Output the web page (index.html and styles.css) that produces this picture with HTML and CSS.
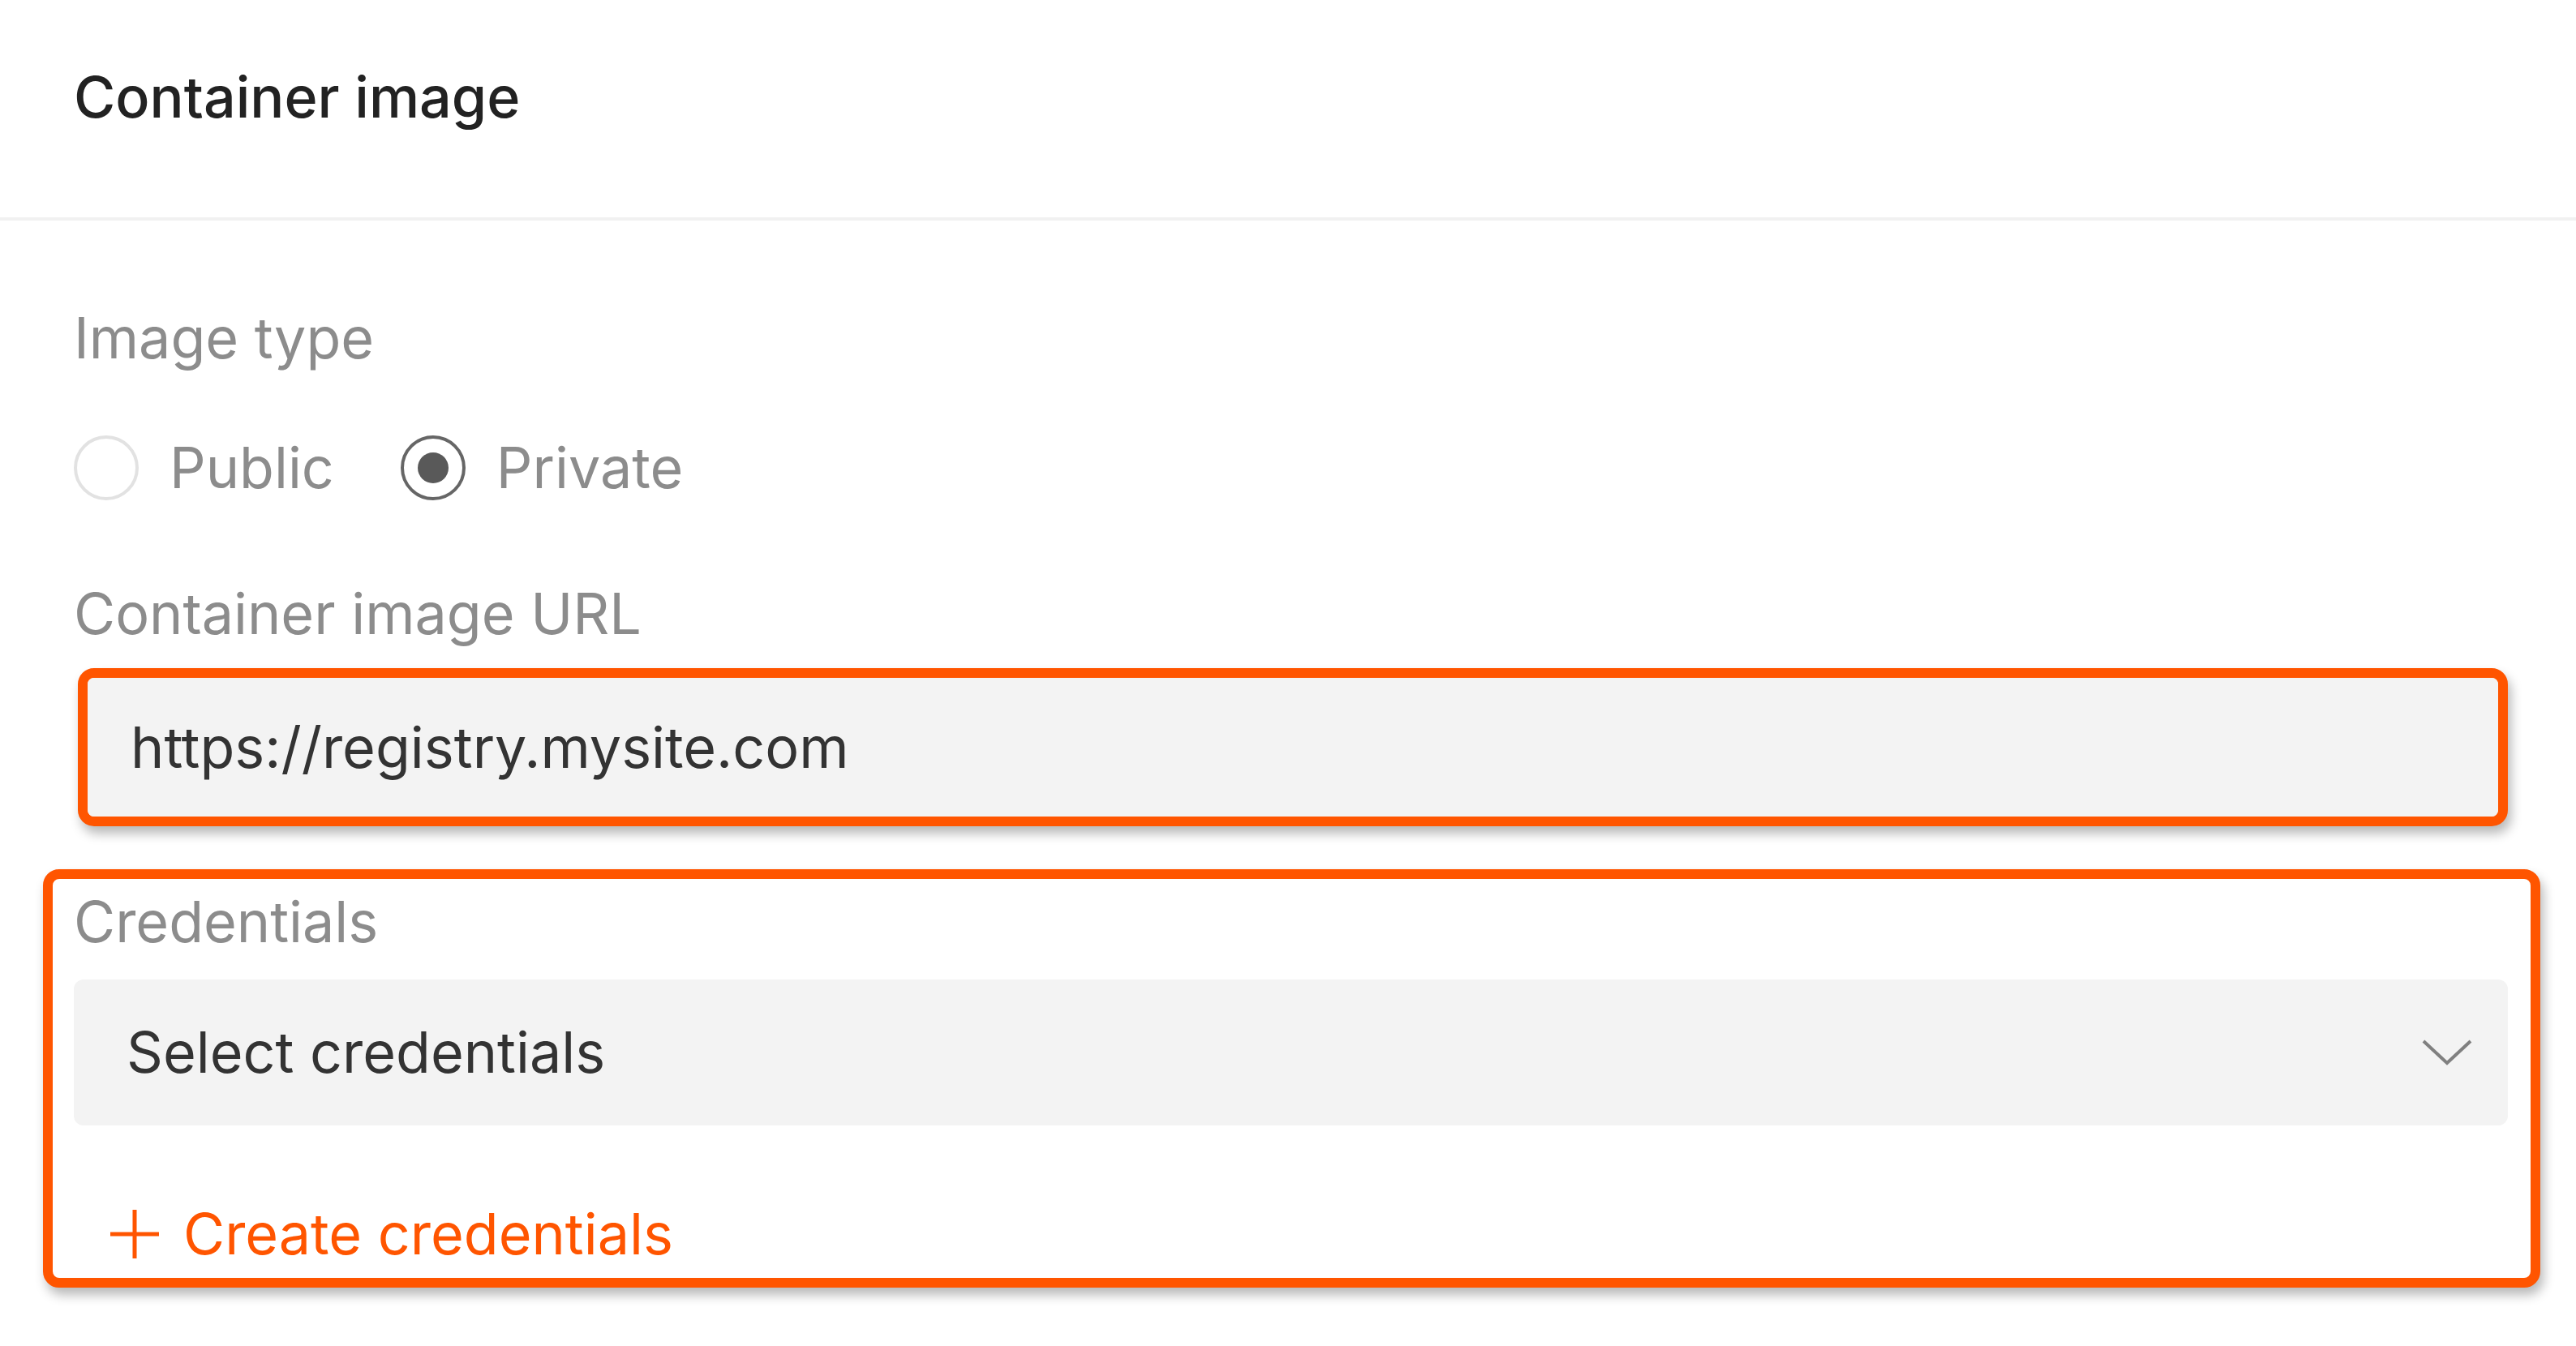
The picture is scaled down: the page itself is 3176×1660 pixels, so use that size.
FILE: index.html
```html
<!DOCTYPE html>
<html lang="en">
<head>
    <meta charset="UTF-8">
    <meta name="viewport" content="width=device-width, initial-scale=1.0">
    <title>Container image</title>
    <link rel="stylesheet" href="styles.css">
</head>
<body>

    <div class="panel-header">
        <h2>Container image</h2>
    </div>

    <form class="panel-body">
        <div class="field-label">Image type</div>
        <div class="radio-group">
            <label class="radio">
                <input type="radio" name="imageType" value="public">
                <span class="radio-mark"></span>
                Public
            </label>
            <label class="radio">
                <input type="radio" name="imageType" value="private" checked>
                <span class="radio-mark"></span>
                Private
            </label>
        </div>

        <div class="field-label url-label">Container image URL</div>
        <div class="highlight url-box">
            <input type="text" class="text-input" value="https://registry.mysite.com">
        </div>

        <!-- Credentials block, outlined -->
        <div class="highlight creds-box">
            <div class="field-label">Credentials</div>
            <div class="select">
                <span>Select credentials</span>
                <svg class="chevron" width="62" height="32" viewBox="0 0 62 32">
                    <path d="M2 2 L31 29 L60 2" fill="none" stroke="#808080" stroke-width="4"/>
                </svg>
            </div>
            <a href="#" class="create-link">
                <svg class="plus" width="60" height="60" viewBox="0 0 60 60">
                    <path d="M30 0 V60 M0 30 H60" stroke="#ff5500" stroke-width="5"/>
                </svg>
                Create credentials
            </a>
        </div>
    </form>

</body>
</html>
```

FILE: styles.css
```css
/* Base */
body {
    margin: 0;
    background-color: #fff;
    font-family: Inter, "Noto Sans", sans-serif;
    font-size: 70px;
    line-height: 88px;
    color: #333;
}

/* Header */
.panel-header {
    padding: 76px 91px 104px;
    border-bottom: 4px solid #f1f1f1;
}

.panel-header h2 {
    margin: 0;
    font-size: 70px;
    font-weight: 500;
    line-height: 88px;
    color: #222;
}

/* Body */
.panel-body {
    padding: 101px 84px 80px 91px;
}

.field-label {
    color: #8c8c8c;
}

.radio-group {
    display: flex;
    align-items: center;
    gap: 82px;
    margin-top: 72px;
    color: #8c8c8c;
}

.radio {
    display: flex;
    align-items: center;
    gap: 38px;
    cursor: pointer;
}

.radio input {
    display: none;
}

.radio-mark {
    width: 80px;
    height: 80px;
    box-sizing: border-box;
    border: 4px solid #e2e2e2;
    border-radius: 50%;
    display: flex;
    align-items: center;
    justify-content: center;
}

.radio input:checked + .radio-mark {
    border-color: #666;
}

.radio input:checked + .radio-mark::after {
    content: "";
    width: 38px;
    height: 38px;
    border-radius: 50%;
    background-color: #595959;
}

.url-label {
    margin-top: 92px;
}

/* Orange outline around highlighted parts */
.highlight {
    border: 12px solid #ff5500;
    border-radius: 20px;
    box-shadow: 4px 9px 14px rgba(0, 0, 0, 0.28);
}

.url-box {
    margin: 23px 0 0 5px;
    background-color: #f3f3f3;
}

.text-input {
    display: block;
    width: 100%;
    height: 171px;
    box-sizing: border-box;
    padding: 0 53px;
    border: none;
    border-radius: 8px;
    background-color: #f3f3f3;
    font-family: inherit;
    font-size: 70px;
    color: #333;
    outline: none;
}

.creds-box {
    margin: 53px -40px 0 -38px;
    padding: 9px 28px 10px 26px;
    background-color: #fff;
}

.select {
    display: flex;
    align-items: center;
    justify-content: space-between;
    height: 180px;
    margin-top: 27px;
    padding: 0 44px 0 65px;
    border-radius: 12px;
    background-color: #f3f3f3;
    color: #333;
}

.create-link {
    display: flex;
    align-items: center;
    gap: 30px;
    margin-top: 90px;
    padding-left: 45px;
    color: #ff5500;
    text-decoration: none;
}
```
